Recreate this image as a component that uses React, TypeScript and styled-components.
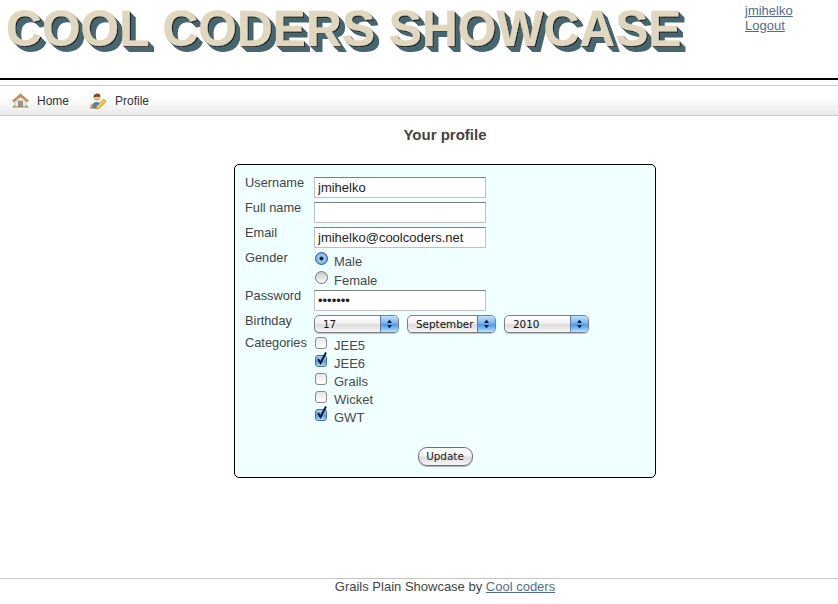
import styled, { createGlobalStyle } from 'styled-components';

const GlobalStyle = createGlobalStyle`
  html, body {
    margin: 0;
    padding: 0;
    background: #ffffff;
    font-family: "Liberation Sans", Arial, sans-serif;
    font-size: 13px;
    color: #444444;
  }
`;

const Page = styled.div`
  width: 838px;
  height: 604px;
  display: flex;
  flex-direction: column;
  overflow: hidden;
`;

const Header = styled.header`
  height: 78px;
  display: flex;
  justify-content: space-between;
  border-bottom: 2px solid #000000;
`;

const Logo = styled.h1`
  margin: 0;
  padding: 3px 0 0 6px;
  font-size: 49.7px;
  line-height: 52px;
  font-weight: 700;
  white-space: nowrap;
  color: #e1d6be;
  -webkit-text-stroke: 0.4px #e1d6be;
  text-shadow:
    1px 1px 0 #111111,
    2px 2px 0 #466670,
    3px 3px 0 #466670,
    4px 4px 0 #466670,
    5px 5px 0 #466670,
    6px 6px 0 #466670;
`;

const UserBox = styled.div`
  width: 93px;
  padding-top: 3px;
  display: flex;
  flex-direction: column;
  align-items: flex-start;
  line-height: 15px;
`;

const Link = styled.a`
  color: #526b92;
  text-decoration: underline;
  cursor: pointer;
`;

const Nav = styled.nav`
  margin-top: 5px;
  height: 29px;
  display: flex;
  align-items: center;
  padding-left: 12px;
  gap: 21px;
  border-top: 1px solid #cccccc;
  border-bottom: 1px solid #cccccc;
  background: linear-gradient(#ffffff 0%, #ffffff 40%, #e9e9e9 100%);
`;

const NavItem = styled.a`
  display: flex;
  align-items: center;
  gap: 8px;
  font-size: 12px;
  color: #333333;
`;

const Main = styled.main`
  flex: 1;
  display: flex;
  flex-direction: column;
  align-items: center;
`;

const Title = styled.h2`
  margin: 9px 0 0 52px;
  font-size: 15px;
  line-height: 20px;
  font-weight: 700;
  color: #444444;
`;

const Panel = styled.form`
  box-sizing: border-box;
  margin: 19px 0 0 52px;
  width: 422px;
  height: 314px;
  padding: 12px 10px 0;
  border: 1px solid #000000;
  border-radius: 5px;
  background: #f0ffff;
  display: flex;
  flex-direction: column;
`;

const Row = styled.div<{ $height: number }>`
  display: grid;
  grid-template-columns: 69px 1fr;
  height: ${(p) => p.$height}px;
`;

const Label = styled.label<{ $raised?: boolean }>`
  margin-top: ${(p) => (p.$raised ? -1 : 0)}px;
  font-size: 12.8px;
  line-height: 13px;
  color: #444444;
`;

const TextInput = styled.input`
  box-sizing: border-box;
  width: 172px;
  height: 21px;
  padding: 0 3px;
  border: 1px solid #c0c0c0;
  border-top-color: #808080;
  background: #ffffff;
  font-family: "Liberation Sans", Arial, sans-serif;
  font-size: 13px;
  color: #222222;
  outline: none;
`;

const OptionList = styled.div`
  display: flex;
  flex-direction: column;
`;

const OptionRow = styled.div<{ $height: number; $gap: number }>`
  height: ${(p) => p.$height}px;
  display: flex;
  align-items: flex-start;
  gap: ${(p) => p.$gap}px;
  padding-left: 1px;
  font-size: 13px;
`;

const OptionText = styled.span<{ $offset: number }>`
  margin-top: ${(p) => p.$offset}px;
  line-height: 15px;
  color: #4a4a4a;
`;

const Radio = styled.span<{ $on?: boolean }>`
  box-sizing: border-box;
  flex: none;
  width: 13px;
  height: 13px;
  margin-top: 1px;
  border-radius: 50%;
  border: 1px solid ${(p) => (p.$on ? '#34577f' : '#777777')};
  background: ${(p) =>
    p.$on
      ? 'radial-gradient(circle at 50% 50%, #10243c 0 1.6px, #a4d0f5 2.4px, #4a94e4 100%)'
      : 'linear-gradient(#c8c8c8, #fbfbfb)'};
`;

const Box = styled.span<{ $on?: boolean }>`
  box-sizing: border-box;
  flex: none;
  position: relative;
  width: 12px;
  height: 12px;
  margin-top: 1px;
  border-radius: 3px;
  border: 1px solid ${(p) => (p.$on ? '#4c6f96' : '#8a8a8a')};
  background: ${(p) =>
    p.$on ? 'linear-gradient(#a4cdf3, #5c9fe4 60%, #b4dbf9)' : 'linear-gradient(#e6e6e6, #ffffff)'};
`;

const Tick = styled.svg`
  position: absolute;
  left: 0;
  top: -5px;
`;

const Selects = styled.div`
  display: flex;
  gap: 8px;
`;

const SelectBox = styled.div<{ $width: number }>`
  box-sizing: border-box;
  width: ${(p) => p.$width}px;
  height: 18px;
  display: flex;
  border: 1px solid #808080;
  border-radius: 5px;
  overflow: hidden;
  background: linear-gradient(#ffffff, #f2f2f2 45%, #dcdcdc 55%, #f6f6f6);
  box-shadow: 0 1px 1px rgba(0, 0, 0, 0.25);
`;

const SelectText = styled.span`
  flex: 1;
  padding-left: 8px;
  font-family: "DejaVu Sans", Verdana, sans-serif;
  font-size: 10.4px;
  line-height: 17px;
  color: #111111;
`;

const SelectCap = styled.span`
  flex: none;
  width: 17px;
  display: flex;
  align-items: center;
  justify-content: center;
  background: linear-gradient(#c0e0fa, #79b6f0 45%, #4a97e8 55%, #b4e4fb);
  border-left: 1px solid #5b7fa8;
`;

const Actions = styled.div`
  display: flex;
  justify-content: center;
  margin-top: 21px;
`;

const Button = styled.button`
  box-sizing: border-box;
  width: 55px;
  height: 19px;
  padding: 0 0 2px;
  border: 1px solid #707070;
  border-radius: 9px;
  background: linear-gradient(#ffffff, #f4f4f4 45%, #dcdcdc 55%, #f6f6f6);
  box-shadow: 0 1px 1px rgba(0, 0, 0, 0.3);
  font-family: "DejaVu Sans", Verdana, sans-serif;
  font-size: 10.4px;
  color: #222222;
`;

const Footer = styled.footer`
  height: 25px;
  border-top: 1px solid #c4c4c4;
  text-align: center;
  font-size: 13px;
  line-height: 16px;
  color: #444444;
  padding-left: 52px;
`;

function HomeIcon() {
  return (
    <svg width="17" height="15" viewBox="0 0 17 15">
      <path d="M0.5 14.5c.3-1.6 1.5-2.2 3-2.2h10c1.5 0 2.7.6 3 2.2z" fill="#72b04c" />
      <path d="M3 7h11v6.5H3z" fill="#f1e8d4" stroke="#b5a688" strokeWidth="0.6" />
      <path d="M0.5 7.8 8.5 0.8l8 7-1.2 1-6.8-5.6-6.8 5.6z" fill="#cf9a5c" stroke="#96683a" strokeWidth="0.6" />
      <path d="M3 7 8.5 2.6 14 7 8.5 4.4z" fill="#c48c4a" />
      <rect x="6.6" y="8.6" width="3.8" height="5" fill="#949494" stroke="#666666" strokeWidth="0.5" />
    </svg>
  );
}

function ProfileIcon() {
  return (
    <svg width="17" height="16" viewBox="0 0 17 16">
      <path d="M0.5 15.5c-.6-2.4.4-4 2.4-4.6l2-1.2 4.5.4-1 4.5z" fill="#e9a63e" stroke="#a8701d" strokeWidth="0.4" />
      <path d="M2.5 14.5c-.3-3 1.3-5.5 4-5.5s4 1.4 4.2 3.4L7 15.5H3z" fill="#3d82dc" />
      <circle cx="7" cy="4.6" r="3.4" fill="#eab98c" />
      <path d="M3.5 4.4C3.6 1.6 5.3.5 7.2.5c2 0 3.5 1.2 3.4 3.3C8.5 3.9 6 3.2 3.5 4.4z" fill="#7a4520" />
      <path d="M6.5 13.2 13.6 6l2.8 2.2-7.2 7.2-3 .5z" fill="#f4c84a" stroke="#b07f1d" strokeWidth="0.6" />
    </svg>
  );
}

function Updown() {
  return (
    <svg width="7" height="10" viewBox="0 0 7 10">
      <path d="M3.5 0.5 6 4H1zM3.5 9.5 1 6h5z" fill="#10233f" />
    </svg>
  );
}

function Select({ value, width }: { value: string; width: number }) {
  return (
    <SelectBox $width={width}>
      <SelectText>{value}</SelectText>
      <SelectCap>
        <Updown />
      </SelectCap>
    </SelectBox>
  );
}

const categories = [
  { name: 'JEE5', on: false },
  { name: 'JEE6', on: true },
  { name: 'Grails', on: false },
  { name: 'Wicket', on: false },
  { name: 'GWT', on: true },
];

function App() {
  return (
    <Page>
      <GlobalStyle />
      <Header>
        <Logo>COOL CODERS SHOWCASE</Logo>
        <UserBox>
          <Link>jmihelko</Link>
          <Link>Logout</Link>
        </UserBox>
      </Header>
      <Nav>
        <NavItem>
          <HomeIcon />
          Home
        </NavItem>
        <NavItem>
          <ProfileIcon />
          Profile
        </NavItem>
      </Nav>
      <Main>
        <Title>Your profile</Title>
        <Panel>
          <Row $height={25}>
            <Label $raised>Username</Label>
            <TextInput defaultValue="jmihelko" />
          </Row>
          <Row $height={25}>
            <Label $raised>Full name</Label>
            <TextInput />
          </Row>
          <Row $height={24}>
            <Label $raised>Email</Label>
            <TextInput defaultValue="jmihelko@coolcoders.net" />
          </Row>
          <Row $height={39}>
            <Label>Gender</Label>
            <OptionList>
              <OptionRow $height={19} $gap={6}>
                <Radio $on />
                <OptionText $offset={3}>Male</OptionText>
              </OptionRow>
              <OptionRow $height={19} $gap={6}>
                <Radio />
                <OptionText $offset={3}>Female</OptionText>
              </OptionRow>
            </OptionList>
          </Row>
          <Row $height={25}>
            <Label $raised>Password</Label>
            <TextInput type="password" defaultValue="jmihelk" />
          </Row>
          <Row $height={21}>
            <Label $raised>Birthday</Label>
            <Selects>
              <Select value="17" width={85} />
              <Select value="September" width={89} />
              <Select value="2010" width={85} />
            </Selects>
          </Row>
          <Row $height={90}>
            <Label>Categories</Label>
            <OptionList>
              {categories.map((c) => (
                <OptionRow key={c.name} $height={18} $gap={7}>
                  <Box $on={c.on}>
                    {c.on && (
                      <Tick width="12" height="14" viewBox="0 0 12 14">
                        <path d="M2 8 4.5 12 10 1.5" fill="none" stroke="#0c1a2c" strokeWidth="2" />
                      </Tick>
                    )}
                  </Box>
                  <OptionText $offset={2}>{c.name}</OptionText>
                </OptionRow>
              ))}
            </OptionList>
          </Row>
          <Actions>
            <Button type="button">Update</Button>
          </Actions>
        </Panel>
      </Main>
      <Footer>
        Grails Plain Showcase by <Link>Cool coders</Link>
      </Footer>
    </Page>
  );
}

export default App;
